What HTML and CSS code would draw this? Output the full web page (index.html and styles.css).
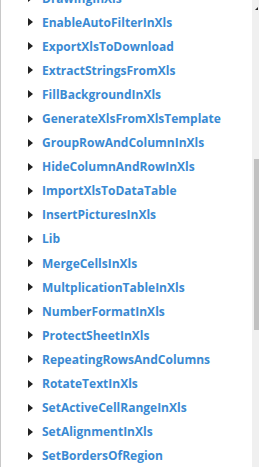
FILE: index.html
```html
<!DOCTYPE html>
<html lang="en">

<head>
    <meta charset="UTF-8" />
    <meta name="viewport" content="width=device-width, initial-scale=1.0" />
    <title>Samples</title>
    <link rel="stylesheet" href="styles.css">
</head>

<body id="html-body">

    <div class="pane">
        <ul class="tree">
            <li class="node"><span class="arrow"></span><a class="label">DrawingInXls</a></li>
            <li class="node"><span class="arrow"></span><a class="label">EnableAutoFilterInXls</a></li>
            <li class="node"><span class="arrow"></span><a class="label">ExportXlsToDownload</a></li>
            <li class="node"><span class="arrow"></span><a class="label">ExtractStringsFromXls</a></li>
            <li class="node"><span class="arrow"></span><a class="label">FillBackgroundInXls</a></li>
            <li class="node"><span class="arrow"></span><a class="label">GenerateXlsFromXlsTemplate</a></li>
            <li class="node"><span class="arrow"></span><a class="label">GroupRowAndColumnInXls</a></li>
            <li class="node"><span class="arrow"></span><a class="label">HideColumnAndRowInXls</a></li>
            <li class="node"><span class="arrow"></span><a class="label">ImportXlsToDataTable</a></li>
            <li class="node"><span class="arrow"></span><a class="label">InsertPicturesInXls</a></li>
            <li class="node"><span class="arrow"></span><a class="label">Lib</a></li>
            <li class="node"><span class="arrow"></span><a class="label">MergeCellsInXls</a></li>
            <li class="node"><span class="arrow"></span><a class="label">MultplicationTableInXls</a></li>
            <li class="node"><span class="arrow"></span><a class="label">NumberFormatInXls</a></li>
            <li class="node"><span class="arrow"></span><a class="label">ProtectSheetInXls</a></li>
            <li class="node"><span class="arrow"></span><a class="label">RepeatingRowsAndColumns</a></li>
            <li class="node"><span class="arrow"></span><a class="label">RotateTextInXls</a></li>
            <li class="node"><span class="arrow"></span><a class="label">SetActiveCellRangeInXls</a></li>
            <li class="node"><span class="arrow"></span><a class="label">SetAlignmentInXls</a></li>
            <li class="node"><span class="arrow"></span><a class="label">SetBordersOfRegion</a></li>
        </ul>
        <div class="scroll">
            <span class="scroll-up"></span>
            <span class="scroll-thumb"></span>
        </div>
    </div>

</body>

</html>
```

FILE: styles.css
```css
html,
#html-body {
    margin: 0;
    height: 100%;
    overflow: hidden;
    background-color: rgb(255, 255, 255);
}

.pane {
    display: flex;
    height: 467px;
    border-left: 1px solid rgb(200, 200, 200);
}

.tree {
    flex: 1;
    list-style: none;
    margin: -14px 0 0 0;
    padding: 0 0 0 26px;
}

.node {
    display: flex;
    align-items: center;
    height: 24.1px;
    gap: 9px;
}

.arrow {
    width: 0;
    height: 0;
    border-left: 5px solid rgb(34, 34, 34);
    border-top: 4px solid transparent;
    border-bottom: 4px solid transparent;
    margin-left: 1px;
}

.label {
    font-family: "Open Sans", sans-serif;
    font-weight: 700;
    font-size: 12px;
    color: rgb(58, 138, 211);
    white-space: nowrap;
}

.scroll {
    width: 7px;
    background-color: rgb(240, 240, 240);
    display: flex;
    flex-direction: column;
    align-items: flex-end;
}

.scroll-up {
    margin: 7px 1px 0 0;
    width: 0;
    height: 0;
    border-right: 3px solid rgb(40, 40, 40);
    border-top: 3px solid transparent;
}

.scroll-thumb {
    margin-top: 149px;
    width: 5px;
    height: 171px;
    background-color: rgb(193, 193, 193);
}
```
